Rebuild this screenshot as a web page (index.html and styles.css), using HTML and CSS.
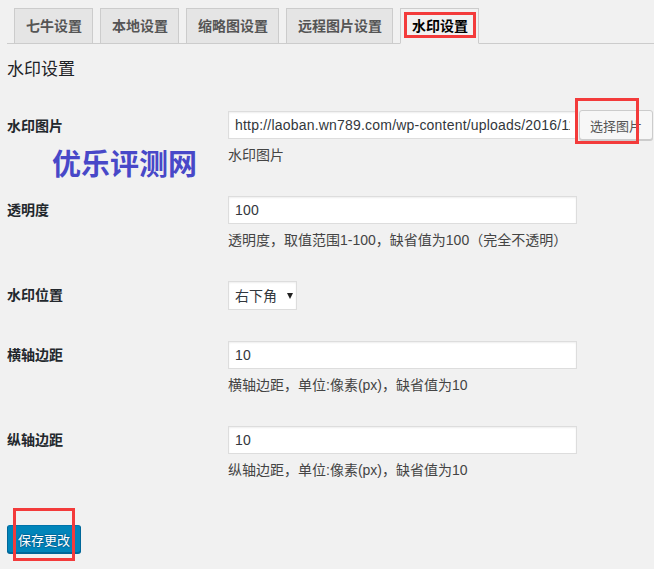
FILE: index.html
```html
<!DOCTYPE html>
<html lang="zh-CN">
<head>
<meta charset="utf-8">
<title>水印设置</title>
<link rel="stylesheet" href="styles.css">
</head>
<body>
<div class="page">
  <nav class="tabs">
    <a class="tab">七牛设置</a>
    <a class="tab">本地设置</a>
    <a class="tab">缩略图设置</a>
    <a class="tab">远程图片设置</a>
    <a class="tab tab-active">水印设置</a>
  </nav>

  <h2 class="section-title">水印设置</h2>

  <form class="form">
    <div class="row">
      <div class="label label-tall">水印图片</div>
      <div class="field">
        <div class="field-line">
          <input class="text-input" type="text" value="http://laoban.wn789.com/wp-content/uploads/2016/11/watermark.png">
          <button type="button" class="btn-secondary">选择图片</button>
        </div>
        <p class="desc">水印图片</p>
      </div>
    </div>

    <div class="row">
      <div class="label">透明度</div>
      <div class="field">
        <input class="text-input" type="text" value="100">
        <p class="desc">透明度，取值范围1-100，缺省值为100（完全不透明）</p>
      </div>
    </div>

    <div class="row">
      <div class="label label-select">水印位置</div>
      <div class="field">
        <span class="select-wrap">
          <select class="select">
            <option>右下角</option>
          </select>
        </span>
      </div>
    </div>

    <div class="row">
      <div class="label">横轴边距</div>
      <div class="field">
        <input class="text-input" type="text" value="10">
        <p class="desc">横轴边距，单位:像素(px)，缺省值为10</p>
      </div>
    </div>

    <div class="row">
      <div class="label">纵轴边距</div>
      <div class="field">
        <input class="text-input" type="text" value="10">
        <p class="desc">纵轴边距，单位:像素(px)，缺省值为10</p>
      </div>
    </div>

    <button type="button" class="btn-primary">保存更改</button>
  </form>
</div>

<div class="watermark">优乐评测网</div>
<div class="mark mark-tab"></div>
<div class="mark mark-choose"></div>
<div class="mark mark-save"></div>
</body>
</html>
```

FILE: styles.css
```css
html, body {
  margin: 0;
  padding: 0;
  background: #f1f1f1;
}

body {
  position: relative;
  width: 654px;
  height: 569px;
  overflow: hidden;
  font-family: "Liberation Sans", "Noto Sans CJK SC", sans-serif;
  font-size: 14px;
  color: #444;
}

.page {
  padding-left: 7px;
}

/* Tabs */
.tabs {
  display: flex;
  padding-top: 8px;
  border-bottom: 1px solid #ccc;
}

.tab {
  margin-left: 7px;
  margin-bottom: -1px;
  padding: 5px 10px 5px 11px;
  line-height: 24px;
  font-size: 14px;
  font-weight: bold;
  color: #555;
  background: #e5e5e5;
  border: 1px solid #ccc;
  border-bottom: 1px solid #ccc;
  text-decoration: none;
  white-space: nowrap;
}

.tab-active {
  background: #f1f1f1;
  color: #000;
  border-bottom-color: #f1f1f1;
}

/* Heading */
.section-title {
  margin: 14px 0 0;
  font-size: 17px;
  line-height: 24px;
  font-weight: normal;
  color: #1d2125;
}

/* Form */
.form {
  margin: 0;
  padding-top: 28px;
}

.row {
  display: grid;
  grid-template-columns: 221px 1fr;
  margin-bottom: 31px;
}

.label {
  font-weight: bold;
  color: #23282d;
  line-height: 28px;
}

.label-tall {
  line-height: 32px;
}

.label-select {
  line-height: 29px;
}

.field-line {
  display: flex;
  align-items: center;
  gap: 2px;
  height: 30px;
}

.text-input {
  box-sizing: border-box;
  width: 349px;
  height: 28px;
  margin: 0;
  padding: 0 6px;
  border: 1px solid #ddd;
  background: #fff;
  box-shadow: inset 0 1px 2px rgba(0, 0, 0, 0.07);
  font-family: "Liberation Sans", "Noto Sans CJK SC", sans-serif;
  font-size: 14px;
  letter-spacing: 0.2px;
  color: #32373c;
  outline: none;
  display: block;
}

.desc {
  margin: 6px 0 0;
  line-height: 20px;
  color: #444;
}

.field-line + .desc {
  margin-top: 5px;
}

.btn-secondary {
  box-sizing: border-box;
  height: 30px;
  margin: 0;
  padding: 0 10px;
  border: 1px solid #ccc;
  border-radius: 3px;
  background: #f7f7f7;
  box-shadow: 0 1px 0 #ccc;
  font-family: "Liberation Sans", "Noto Sans CJK SC", sans-serif;
  font-size: 13px;
  color: #555;
  white-space: nowrap;
}

.select-wrap {
  position: relative;
  display: inline-block;
}

.select-wrap::after {
  content: "";
  position: absolute;
  left: 59px;
  top: 12px;
  border-left: 3px solid transparent;
  border-right: 3px solid transparent;
  border-top: 6px solid #222;
  pointer-events: none;
}

.select {
  -webkit-appearance: none;
  appearance: none;
  box-sizing: border-box;
  width: 69px;
  height: 29px;
  margin: 0;
  padding: 0 6px;
  border: 1px solid #ddd;
  border-radius: 0;
  background: #fff;
  box-shadow: inset 0 1px 2px rgba(0, 0, 0, 0.07);
  font-family: "Liberation Sans", "Noto Sans CJK SC", sans-serif;
  font-size: 14px;
  color: #32373c;
  display: block;
}

.btn-primary {
  box-sizing: border-box;
  margin-top: 14px;
  height: 28px;
  padding: 0 10px;
  border: 1px solid #0073aa;
  border-color: #0073aa #006799 #006799;
  border-radius: 3px;
  background: #0085ba;
  box-shadow: 0 1px 0 #006799;
  color: #fff;
  text-shadow: 0 -1px 1px #006799, 1px 0 1px #006799, 0 1px 1px #006799, -1px 0 1px #006799;
  font-family: "Liberation Sans", "Noto Sans CJK SC", sans-serif;
  font-size: 13px;
  white-space: nowrap;
}

/* Overlays */
.watermark {
  position: absolute;
  left: 52px;
  top: 146px;
  font-family: "Noto Sans CJK SC", sans-serif;
  font-size: 29px;
  line-height: 32px;
  font-weight: bold;
  color: #4848c8;
  letter-spacing: 0;
}

.mark {
  position: absolute;
  box-sizing: border-box;
  border: 3px solid #f33b3b;
}

.mark-tab {
  left: 404px;
  top: 12px;
  width: 72px;
  height: 26px;
}

.mark-choose {
  left: 575px;
  top: 98px;
  width: 64px;
  height: 46px;
}

.mark-save {
  left: 13px;
  top: 508px;
  width: 62px;
  height: 53px;
}
```
